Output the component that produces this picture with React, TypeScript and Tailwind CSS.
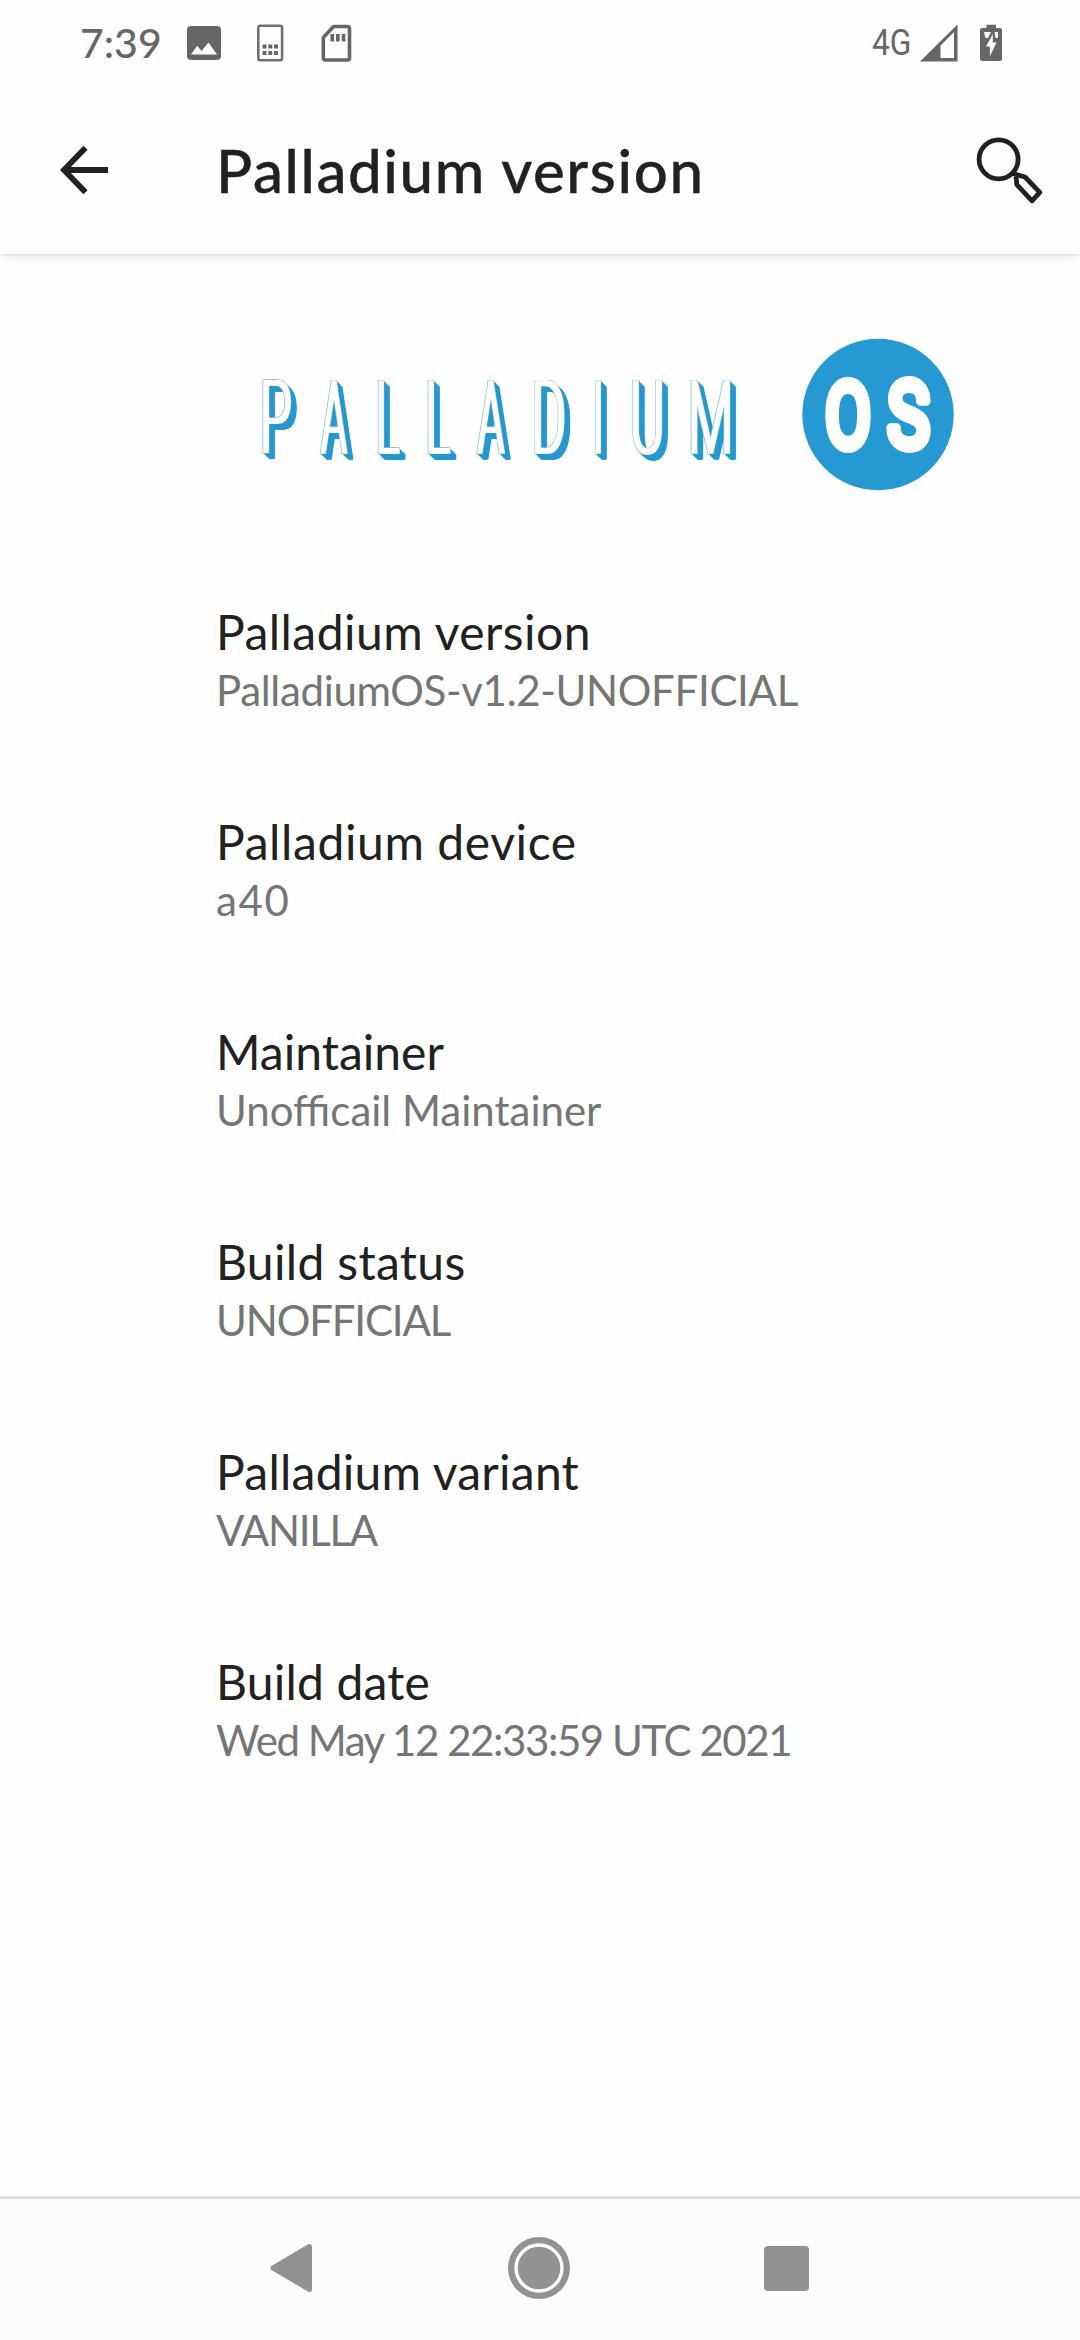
type Pref = {
  title: string;
  titleTracking: string;
  summary: string;
  summaryTracking: string;
};

const prefs: Pref[] = [
  { title: "Palladium version", titleTracking: "tracking-[0.45px]", summary: "PalladiumOS-v1.2-UNOFFICIAL", summaryTracking: "tracking-[-0.33px]" },
  { title: "Palladium device", titleTracking: "tracking-[0.6px]", summary: "a40", summaryTracking: "tracking-[1.6px]" },
  { title: "Maintainer", titleTracking: "tracking-normal", summary: "Unofficail Maintainer", summaryTracking: "tracking-normal" },
  { title: "Build status", titleTracking: "tracking-[0.33px]", summary: "UNOFFICIAL", summaryTracking: "tracking-[-1.15px]" },
  { title: "Palladium variant", titleTracking: "tracking-[0.25px]", summary: "VANILLA", summaryTracking: "tracking-[-1.3px]" },
  { title: "Build date", titleTracking: "tracking-[0.19px]", summary: "Wed May 12 22:33:59 UTC 2021", summaryTracking: "tracking-[-1.45px]" },
];

// Each logo letter: glyph, x position, horizontal squeeze.
const letters: [string, number, number][] = [
  ["P", 260.3, 0.525],
  ["A", 322.1, 0.405],
  ["L", 376.3, 0.44],
  ["L", 426.1, 0.46],
  ["A", 478.6, 0.42],
  ["D", 532.5, 0.51],
  ["I", 593, 0.4],
  ["U", 630.5, 0.515],
  ["M", 688.6, 0.525],
];

const depths = [6, 5.5, 5, 4.5, 4, 3.5, 3, 2.5, 2, 1.5, 1, 0.5];
const spread = [-1.4, 0, 1.4];

function StatusBar() {
  return (
    <div className="flex h-[84px] shrink-0 items-start justify-between pr-[78px] pl-[80px] text-[#666]">
      <div className="flex items-start">
        <span className="w-[107px] pt-[18px] text-[41px] leading-[50px] font-medium">7:39</span>
        <svg className="mt-[26px]" width="34" height="34" viewBox="0 0 34 34">
          <rect width="34" height="34" rx="4" fill="#666" />
          <path d="M4 28.5 10.2 19.8 14.5 25 21.5 16.5 30 28.5Z" fill="#fefefe" />
        </svg>
        <svg className="mt-[24px] ml-[36px]" width="27" height="38" viewBox="0 0 27 38">
          <rect x="1.300" y="1.800" width="23.800" height="34.400" rx="2" fill="none" stroke="#707070" strokeWidth="2.600" />
          <path d="M5.500 20.500h4v4h-4zM11.300 20.500h4v4h-4zM17 20.500h4v4h-4zM5.500 27h4v4h-4zM11.300 27h4v4h-4zM17 27h4v4h-4z" fill="#666" />
        </svg>
        <svg className="mt-[24px] ml-[37px]" width="31" height="39" viewBox="0 0 31 39">
          <path d="M12.500 2.500H26.500a2 2 0 0 1 2 2V34a2 2 0 0 1-2 2H4.300a2 2 0 0 1-2-2V13.500Z" fill="none" stroke="#666" strokeWidth="3.600" strokeLinejoin="round" />
          <path d="M9.500 10h3.600v7.500H9.500zM15 10h3.600v7.500H15zM20.700 10h3.600v7.500h-3.600z" fill="#666" />
        </svg>
      </div>
      <div className="flex items-start">
        <span className="mt-[22px] w-[48px] origin-left scale-x-[0.88] font-[Roboto] text-[36px] leading-[42px]">4G</span>
        <svg className="mt-[24px]" width="38" height="38" viewBox="0 0 38 38">
          <path fillRule="evenodd" d="M37.500.5V37.500H0ZM34 8 20.500 21.500V34H34Z" fill="#666" />
        </svg>
        <svg className="mt-[24px] ml-[22px]" width="22" height="38" viewBox="0 0 22 38">
          <path d="M6.500.8h9.500V4h4a2 2 0 0 1 2 2V35a2 2 0 0 1-2 2H2a2 2 0 0 1-2-2V6a2 2 0 0 1 2-2h4.500Z" fill="#666" />
          <path d="M4 8h7l-3 6H5.500ZM14.500 8H18V14H15.500Z" fill="#fefefe" />
          <path d="M12.800 10V18.500H16.500L9.800 32.500V22.500H6Z" fill="#fefefe" />
        </svg>
      </div>
    </div>
  );
}

function AppBar() {
  return (
    <header className="flex h-[170px] shrink-0 items-center pl-[60px] shadow-[0_1px_2px_rgba(0,0,0,0.1),0_6px_8px_-2px_rgba(0,0,0,0.07)]">
      <svg className="mt-[2px]" width="49" height="50" viewBox="0 0 49 50" fill="none" stroke="#212121" strokeWidth="5.800">
        <path d="M48 25H4M25.500 2.800 4 25 25.500 47.200" />
      </svg>
      <h1 className="mt-[2px] ml-[107px] flex-1 text-[60px] leading-[72px] font-medium tracking-[1.6px] text-[#212121] [-webkit-text-stroke:0.4px_#212121]">Palladium version</h1>
      <svg className="mt-[1px] mr-[35px]" width="70" height="70" viewBox="974 135 70 70" fill="none" stroke="#212121" strokeWidth="4.800" strokeLinejoin="round">
        <circle cx="997.600" cy="159.300" r="19.500" />
        <path d="M1012 173.500 1024 177 1038.800 192.300 1031 200.800 1015.800 184.700 1015 176.500" />
      </svg>
    </header>
  );
}

function Logo() {
  return (
    <svg className="mt-[66px] ml-[240px] shrink-0" width="740" height="190" viewBox="240 320 740 190" fontFamily="Roboto, sans-serif" fontSize="98">
      <g fill="#2699cf" stroke="#2699cf" strokeWidth="3">
        {depths.map((d) => spread.map((s) => <use key={`${d}/${s}`} href="#wordmark" x={d + s} y={d} />))}
      </g>
      <g fill="#80bccb" stroke="#80bccb" strokeWidth="4">
        {spread.map((s) => (
          <use key={s} href="#wordmark" x={s * 1.25} />
        ))}
      </g>
      <g fill="#fefefe" stroke="#fefefe" strokeWidth="3">
        <use href="#wordmark" x="-1.400" />
        <g id="wordmark" fontWeight="100">
          {letters.map(([ch, x, sx], i) => (
            <text key={i} transform={`translate(${x} 452.300) scale(${sx} 1)`}>
              {ch}
            </text>
          ))}
        </g>
        <use href="#wordmark" x="1.400" />
      </g>
      <circle cx="878" cy="414.500" r="75.700" fill="#2699d3" />
      <g fontSize="90" fontWeight="400" fill="#fff" stroke="#fff" strokeWidth="10" strokeLinejoin="round">
        <text transform="translate(825.300 446.900) scale(0.735 1)">O</text>
        <text transform="translate(887.500 446.900) scale(0.785 1)">S</text>
      </g>
    </svg>
  );
}

function NavBar() {
  return (
    <nav className="flex h-[144px] shrink-0 items-center justify-between border-t-[3px] border-[#e0e0e0] bg-[#fcfcfc] pr-[271px] pb-[3px] pl-[269px]">
      <svg width="44" height="50" viewBox="0 0 44 50">
        <path d="M4 25 40.500 3.500V46.500Z" fill="#929292" stroke="#929292" strokeWidth="5" strokeLinejoin="round" />
      </svg>
      <svg className="ml-[1px]" width="62" height="62" viewBox="0 0 62 62">
        <circle cx="31" cy="31" r="31" fill="#929292" />
        <circle cx="31" cy="31" r="23" fill="#929292" stroke="#fff" strokeWidth="3.400" />
      </svg>
      <div className="h-[45px] w-[45px] rounded-[4px] bg-[#929292]" />
    </nav>
  );
}

export default function App() {
  return (
    <div className="flex h-[2340px] w-[1080px] flex-col overflow-hidden bg-[#fefefe] font-[Lato,sans-serif]">
      <StatusBar />
      <AppBar />
      <Logo />
      <main className="mt-[94px] flex flex-1 flex-col pl-[216px]">
        {prefs.map((p) => (
          <section key={p.title} className="h-[210px] shrink-0 whitespace-nowrap">
            <h2 className={`text-[48px] leading-[56px] text-[#212121] ${p.titleTracking}`}>{p.title}</h2>
            <p className={`mt-[4px] text-[42px] leading-[52px] text-[#757575] ${p.summaryTracking}`}>{p.summary}</p>
          </section>
        ))}
      </main>
      <NavBar />
    </div>
  );
}
